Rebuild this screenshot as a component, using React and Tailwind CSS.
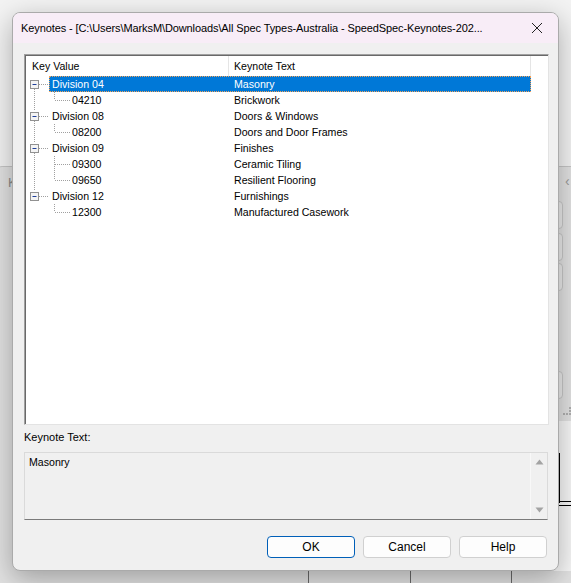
import React from "react";

const rows = [
  { key: "Division 04", text: "Masonry", level: 0, selected: true },
  { key: "04210", text: "Brickwork", level: 1 },
  { key: "Division 08", text: "Doors & Windows", level: 0 },
  { key: "08200", text: "Doors and Door Frames", level: 1 },
  { key: "Division 09", text: "Finishes", level: 0 },
  { key: "09300", text: "Ceramic Tiling", level: 1 },
  { key: "09650", text: "Resilient Flooring", level: 1 },
  { key: "Division 12", text: "Furnishings", level: 0 },
  { key: "12300", text: "Manufactured Casework", level: 1 },
];

const ui = { fontFamily: '"Liberation Sans", Arial, sans-serif' };

// dotted connector lines + expand boxes of the tree
const TreeLines = () => {
  const c = (i) => 8 + i * 16;
  const divs = [0, 2, 4, 7];
  const kids = [
    [0, [1]],
    [2, [3]],
    [4, [5, 6]],
    [7, [8]],
  ];
  const dot = { stroke: "#a0a0a0", strokeWidth: 1, strokeDasharray: "1 1" };
  return (
    <svg className="absolute left-0 top-0 pointer-events-none" width="50" height="144">
      {divs.slice(0, -1).map((d, i) => (
        <line key={"v" + d} x1="8.5" x2="8.5" y1={c(d) + 5} y2={c(divs[i + 1]) - 5} {...dot} />
      ))}
      {divs.map((d) => (
        <line key={"h" + d} x1="13" x2="22" y1={c(d) + 0.5} y2={c(d) + 0.5} {...dot} />
      ))}
      {kids.map(([p, ks]) => (
        <g key={"k" + p}>
          <line x1="28.5" x2="28.5" y1={c(p) + 8} y2={c(ks[ks.length - 1])} {...dot} />
          {ks.map((k) => (
            <line key={k} x1="29" x2="44" y1={c(k) + 0.5} y2={c(k) + 0.5} {...dot} />
          ))}
        </g>
      ))}
      {divs.map((d) => (
        <g key={"b" + d}>
          <rect x="4.5" y={c(d) - 3.5} width="8" height="8" fill="#f4f4f4" stroke="#919191" />
          <line x1="6.5" x2="10.5" y1={c(d) + 0.5} y2={c(d) + 0.5} stroke="#1f3f9a" strokeWidth="1" />
        </g>
      ))}
    </svg>
  );
};

const Row = ({ row }) => {
  const indent = row.level === 0 ? 23 : 43;
  return (
    <div className="flex h-[16px] leading-[16px] text-[10.6px]">
      <div style={{ width: indent }} className="shrink-0" />
      <div
        className={`flex ${
          row.selected
            ? "bg-[#0078d7] text-white outline-1 outline-dotted outline-[#f3a35a] -outline-offset-1"
            : "text-black"
        }`}
      >
        <div style={{ width: 203 - indent }} className="pl-[3px] whitespace-nowrap">
          {row.key}
        </div>
        <div className="w-[302px] pl-[5px] whitespace-nowrap">{row.text}</div>
      </div>
    </div>
  );
};

const Button = ({ label, primary }) => (
  <button
    className={`w-[88px] h-[22px] rounded-[4px] bg-[#fdfdfd] text-[12px] text-black ${
      primary ? "border border-[#005fb8]" : "border border-[#d0d0d0]"
    }`}
  >
    {label}
  </button>
);

export default function App() {
  return (
    <div className="relative w-[571px] h-[583px] overflow-hidden bg-[#f3f3f3]" style={ui}>
      {/* window behind the dialog */}
      <div className="absolute left-[-6px] top-[166px] w-[590px] h-[440px] rounded-[8px] border border-[#c6c6c6] bg-[#e2e2e2]">
        <span className="absolute left-[13px] top-[6px] text-[13px] text-[#8c8c8c]">K</span>
        <span className="absolute left-[570px] top-[4px] text-[14px] text-[#9a9a9a]">‹</span>
        <div className="absolute left-[470px] top-[34px] w-[98px] h-[28px] rounded-[4px] border border-[#c8c8c8] bg-[#ececec]" />
        <div className="absolute left-[470px] top-[66px] w-[98px] h-[28px] rounded-[4px] border border-[#c8c8c8] bg-[#ececec]" />
        <div className="absolute left-[470px] top-[96px] w-[98px] h-[28px] rounded-[4px] border border-[#c8c8c8] bg-[#ececec]" />
        <div className="absolute left-[470px] top-[204px] w-[98px] h-[28px] rounded-[4px] border border-[#c8c8c8] bg-[#ececec]" />
        <div className="absolute left-[568px] top-[240px] w-[8px] h-[8px] border-r-2 border-b-2 border-dotted border-[#b0b0b0]" />
        <div className="absolute left-[555px] top-[254px] w-[40px] h-[150px] bg-[#f7f7f7]">
          <div className="absolute left-[7px] top-[32px] w-[3px] h-[50px] bg-black" />
          <div className="absolute left-[3px] top-[80px] w-[20px] h-[1px] bg-black" />
          <div className="absolute left-[3px] top-[84px] w-[20px] h-[1px] bg-black" />
          <span className="absolute left-[4px] top-[0px] text-[9px] text-black">≈</span>
        </div>
        <div className="absolute left-[313px] top-[400px] w-[1px] h-[40px] bg-[#6a6a6a]" />
        <div className="absolute left-[415px] top-[400px] w-[1px] h-[40px] bg-[#6a6a6a]" />
        <div className="absolute left-[516px] top-[400px] w-[1px] h-[40px] bg-[#6a6a6a]" />
      </div>

      {/* dialog */}
      <div className="absolute left-[12px] top-[12px] w-[547px] h-[559px] flex flex-col rounded-[8px] border border-[#aaaaaa] overflow-hidden bg-[#f0f0f0] shadow-[0_8px_28px_rgba(0,0,0,0.3)]">
        <div className="h-[30px] shrink-0 flex items-center justify-between bg-[#f8edf7] pl-[8px] pr-[10px]">
          <span className="text-[11px] tracking-[-0.1px] text-black whitespace-nowrap">
            Keynotes - [C:\Users\MarksM\Downloads\All Spec Types-Australia - SpeedSpec-Keynotes-202...
          </span>
          <svg width="12" height="12" viewBox="0 0 12 12" className="mr-[5px] shrink-0">
            <path d="M1 1 L11 11 M11 1 L1 11" stroke="#222" strokeWidth="1" fill="none" />
          </svg>
        </div>

        <div className="flex-1 flex flex-col pl-[11px] pr-[9px] pt-[11px]">
          {/* list view */}
          <div className="h-[371px] border-t border-l border-[#a0a0a0] border-r border-b border-r-[#e3e3e3] border-b-[#e3e3e3]">
            <div className="h-full bg-white border-t border-l border-[#696969] flex flex-col">
              <div className="h-[20px] flex text-[10.6px] leading-[20px] text-black">
                <div className="w-[203px] pl-[6px] border-r border-[#e5e5e5]">Key Value</div>
                <div className="w-[302px] pl-[5px] border-r border-[#e5e5e5]">Keynote Text</div>
              </div>
              <div className="relative">
                <TreeLines />
                {rows.map((r) => (
                  <Row key={r.key} row={r} />
                ))}
              </div>
            </div>
          </div>

          <div className="mt-[6px] text-[11px] leading-[13px] text-black">Keynote Text:</div>

          <div className="mt-[8px] mr-[1px] h-[68px] flex border border-[#dadada] border-b-[#7a7a7a] bg-[#f0f0f0]">
            <div className="flex-1 pl-[4px] pt-[2px] text-[10.6px] leading-[14px] text-black">Masonry</div>
            <div className="w-[17px] flex flex-col items-center justify-between py-[6px] border-l border-[#f8f8f8]">
              <svg width="9" height="6" viewBox="0 0 9 6">
                <path d="M0.5 5.5 L4.5 0.5 L8.5 5.5 Z" fill="#a3a3a3" />
              </svg>
              <svg width="9" height="6" viewBox="0 0 9 6">
                <path d="M0.5 0.5 L4.5 5.5 L8.5 0.5 Z" fill="#a3a3a3" />
              </svg>
            </div>
          </div>

          <div className="mt-[16px] mr-[2px] flex justify-end gap-[8px]">
            <Button label="OK" primary />
            <Button label="Cancel" />
            <Button label="Help" />
          </div>
        </div>
      </div>
    </div>
  );
}
